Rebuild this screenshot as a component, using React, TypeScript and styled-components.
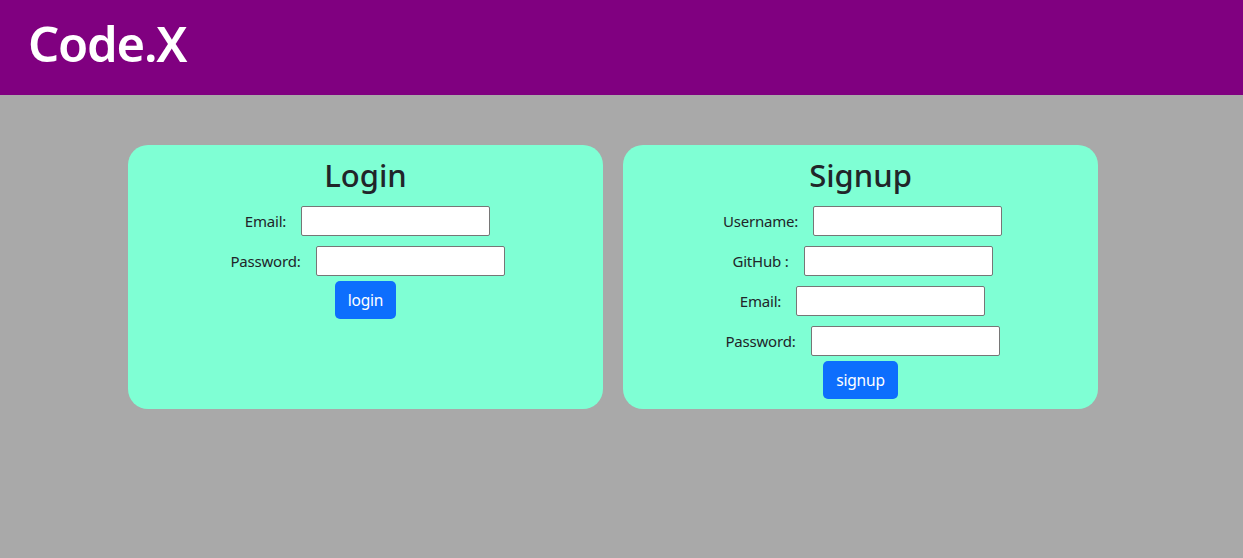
import React from "react";
import styled, { createGlobalStyle } from "styled-components";

const Global = createGlobalStyle`
  html, body { margin: 0; padding: 0; }
  body {
    background: #a9a9a9;
    font-family: "Noto Sans", "Open Sans", sans-serif;
    color: #212529;
    min-height: 558px;
  }
  * { box-sizing: border-box; }
`;

const Header = styled.header`
  height: 95px;
  background: #800080;
  display: flex;
  align-items: center;
  padding: 0 0 8px 28px;
`;

const Logo = styled.h1`
  margin: 0;
  color: #fff;
  font-size: 49px;
  font-weight: 600;
  letter-spacing: -1.2px;
  line-height: 1;
`;

const Main = styled.main`
  display: flex;
  gap: 20px;
  padding: 50px 0 0 128px;
`;

const Card = styled.section`
  width: 475px;
  height: 264px;
  background: #7fffd4;
  border-radius: 20px;
  display: flex;
  flex-direction: column;
  align-items: center;
  padding-top: 11px;
`;

const Title = styled.h2`
  margin: 0 0 12px;
  font-size: 31px;
  font-weight: 500;
  line-height: 38px;
`;

const Form = styled.form`
  display: flex;
  flex-direction: column;
  align-items: center;
  gap: 10px;
`;

const Row = styled.div`
  display: flex;
  align-items: center;
  gap: 15px;
  padding-left: 4px;
  height: 30px;
`;

const Label = styled.label`
  font-size: 15px;
  letter-spacing: -0.2px;
`;

const Input = styled.input`
  width: 189px;
  height: 30px;
  border: 1px solid #767676;
  border-radius: 2px;
  background: #fff;
`;

const Button = styled.button`
  margin-top: -5px;
  background: #0d6efd;
  color: #fff;
  border: none;
  border-radius: 5px;
  height: 38px;
  padding: 0 13px;
  font-family: inherit;
  font-size: 15.5px;
  letter-spacing: -0.2px;
`;

const fields = (names: string[]) =>
  names.map((n) => (
    <Row key={n}>
      <Label>{n}</Label>
      <Input type="text" />
    </Row>
  ));

export default function App() {
  return (
    <>
      <Global />
      <Header>
        <Logo>Code.X</Logo>
      </Header>
      <Main>
        <Card>
          <Title>Login</Title>
          <Form>
            {fields(["Email:", "Password:"])}
            <Button type="button">login</Button>
          </Form>
        </Card>
        <Card>
          <Title>Signup</Title>
          <Form>
            {fields(["Username:", "GitHub :", "Email:", "Password:"])}
            <Button type="button">signup</Button>
          </Form>
        </Card>
      </Main>
    </>
  );
}
